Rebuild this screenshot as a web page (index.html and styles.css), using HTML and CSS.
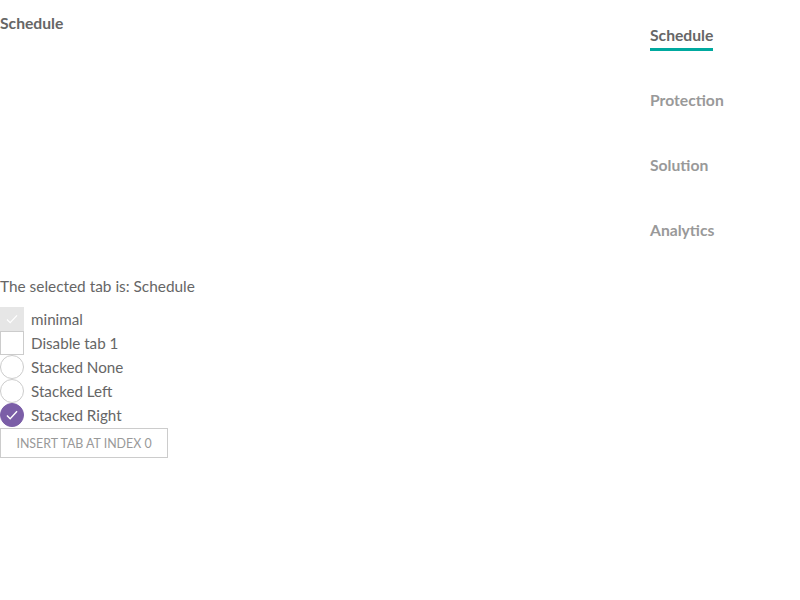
FILE: index.html
```html
<!DOCTYPE html>
<html>
<head>
<meta charset="utf-8">
<link rel="stylesheet" href="styles.css">
</head>
<body>
<div class="tabs">
  <div class="panel">Schedule</div>
  <ul class="tablist">
    <li class="tab active"><span>Schedule</span></li>
    <li class="tab"><span>Protection</span></li>
    <li class="tab"><span>Solution</span></li>
    <li class="tab"><span>Analytics</span></li>
  </ul>
</div>
<p class="status">The selected tab is: Schedule</p>
<div class="options">
  <label class="opt"><span class="box disabled"><svg viewBox="0 0 24 24"><path d="M6.5 12.5l3.5 3.5 7.5-8" fill="none" stroke="#fff" stroke-width="1.3"/></svg></span>minimal</label>
  <label class="opt"><span class="box"></span>Disable tab 1</label>
  <label class="opt"><span class="radio"></span>Stacked None</label>
  <label class="opt"><span class="radio"></span>Stacked Left</label>
  <label class="opt"><span class="radio on"><svg viewBox="0 0 24 24"><path d="M6.5 12.5l3.5 3.5 7.5-8" fill="none" stroke="#fff" stroke-width="1.5"/></svg></span>Stacked Right</label>
  <button class="btn">INSERT TAB AT INDEX 0</button>
</div>
</body>
</html>
```
FILE: styles.css
```css
html, body { margin: 0; padding: 0; background: #fff; }
body { font-family: Lato, "Open Sans", sans-serif; color: #666; font-size: 15.4px; }
.tabs { display: flex; justify-content: space-between; height: 260px; }
.panel { font-weight: 700; font-size: 15.7px; padding-top: 14px; color: #666; }
.tablist { list-style: none; margin: 0; padding: 0; width: 150px; }
.tab { height: 65px; padding-top: 26px; box-sizing: border-box; font-weight: 700; font-size: 15.7px; color: #999; }
.tab span { display: inline-block; padding-bottom: 4px; border-bottom: 3px solid transparent; }
.tab.active span { color: #666; border-bottom-color: #00a99f; }
.status { margin: 16px 0 11px; line-height: 20px; }
.options { display: flex; flex-direction: column; align-items: flex-start; }
.opt { display: flex; align-items: center; height: 24px; line-height: 24px; font-size: 15.2px; }
.box { width: 24px; height: 24px; box-sizing: border-box; border: 1px solid #ccc; margin-right: 7px; display: block; }
.box.disabled { background: #e6e6e6; border-color: #e6e6e6; }
.box svg, .radio svg { display: block; width: 22px; height: 22px; }
.radio { width: 24px; height: 24px; box-sizing: border-box; border: 1px solid #ccc; border-radius: 50%; margin-right: 7px; display: block; }
.radio.on { background: #7b5ea7; border-color: #7b5ea7; }
.btn { margin-top: 1px; height: 30px; width: 168px; border: 1px solid #ccc; background: #fff; color: #999; font-family: inherit; font-size: 12.4px; padding: 0; }
```
